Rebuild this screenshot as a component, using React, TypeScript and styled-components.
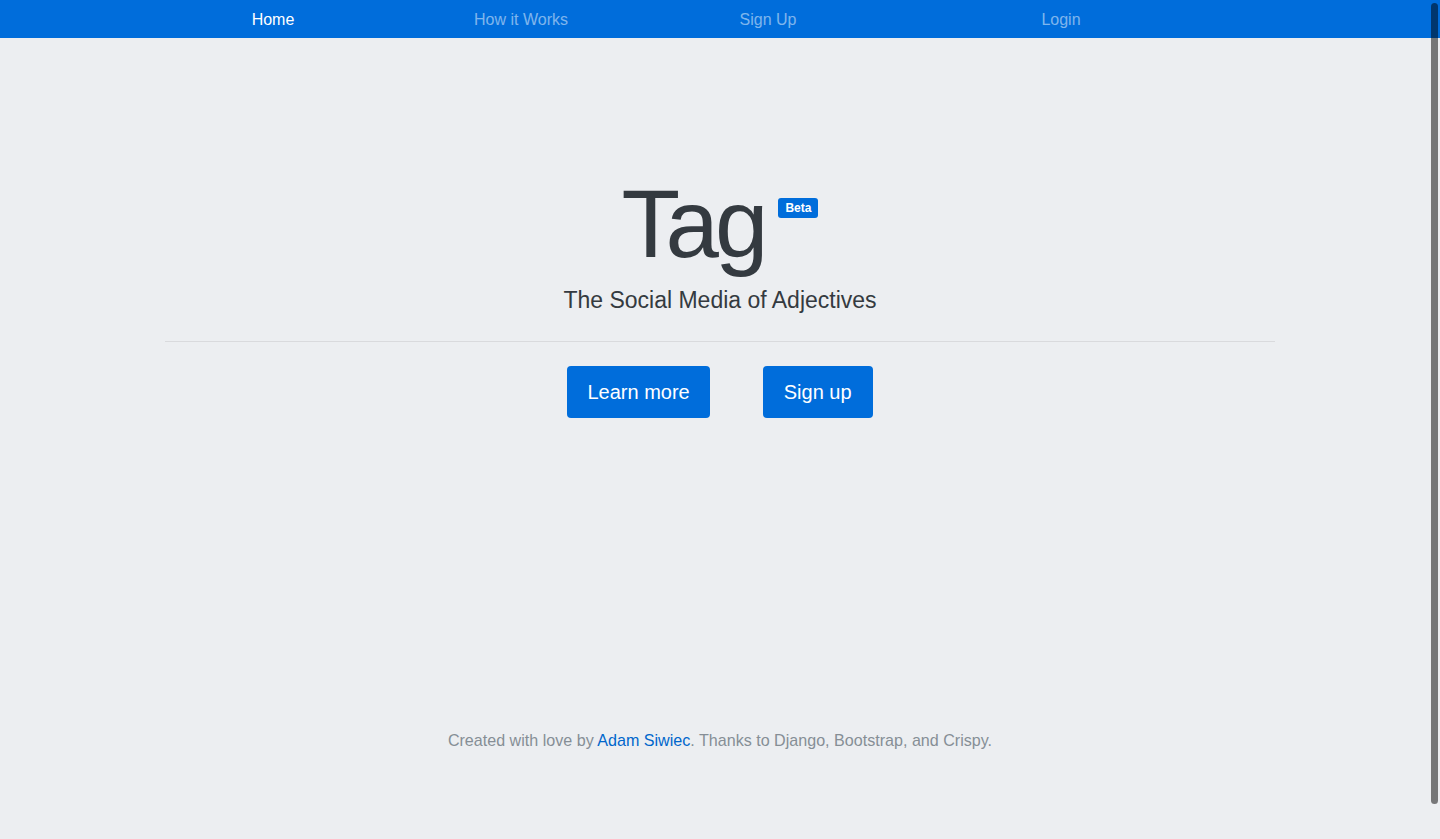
import React from 'react';
import styled, { createGlobalStyle } from 'styled-components';

const GlobalStyle = createGlobalStyle`
    html, body {
        margin: 0;
        padding: 0;
        height: 100%;
        overflow: hidden;
        background: #eceef1;
    }
    body {
        font-family: 'Liberation Sans', Arial, Helvetica, sans-serif;
        color: #343a40;
    }
`;

const Page = styled.div`
    min-height: 839px;
    background: #eceef1;
`;

const NavBar = styled.nav`
    height: 38px;
    background: #006ddb;
`;

const NavInner = styled.ul`
    list-style: none;
    margin: 0 auto;
    padding: 0;
    width: 1140px;
    height: 38px;
    display: grid;
    grid-template-columns: 246px 250px 244px 342px;
    align-items: center;
    justify-items: center;
`;

const NavItem = styled.li<{ $active?: boolean }>`
    font-size: 16px;
    line-height: 24px;
    padding-top: 1px;
    color: ${(p) => (p.$active ? '#ffffff' : 'rgba(255, 255, 255, 0.5)')};
    cursor: pointer;
`;

const Container = styled.main`
    width: 1110px;
    margin: 0 auto;
    padding-top: 128px;
    text-align: center;
`;

const Title = styled.h1`
    margin: 0;
    font-size: 96px;
    font-weight: 300;
    line-height: 1.2;
    letter-spacing: -4px;
    color: #343a40;
`;

const Badge = styled.span`
    display: inline-block;
    vertical-align: top;
    margin-top: 32px;
    margin-left: 14px;
    padding: 3px 7px;
    font-size: 12px;
    font-weight: 700;
    line-height: 14px;
    letter-spacing: 0;
    color: #fff;
    background: #006ddb;
    border-radius: 3px;
`;

const Lead = styled.p`
    margin: 2px 0 0;
    font-size: 23px;
    font-weight: 300;
    line-height: 1.5;
    color: #343a40;
`;

const Divider = styled.hr`
    margin: 23px 0 24px;
    border: 0;
    border-top: 1px solid #d9dadd;
`;

const ButtonRow = styled.div`
    display: flex;
    justify-content: center;
    gap: 53px;
`;

const Button = styled.a<{ $wide?: boolean }>`
    display: inline-block;
    padding: 11px ${(p) => (p.$wide ? '20px' : '21px')};
    font-size: 20px;
    line-height: 30px;
    color: #fff;
    background: #006ddb;
    border-radius: 4px;
    text-decoration: none;
    cursor: pointer;
`;

const Footer = styled.footer`
    margin-top: 310px;
    font-size: 16.1px;
    line-height: 24px;
    color: #868e96;
    text-align: center;
`;

const FooterLink = styled.a`
    color: #0066cc;
    text-decoration: none;
`;

// overlay scrollbar thumb, macOS style
const ScrollThumb = styled.div`
    position: fixed;
    top: 3px;
    right: 2px;
    width: 7px;
    height: 801px;
    border-radius: 4px;
    background: rgba(0, 0, 0, 0.5);
`;

const App = () => {
    return (
        <Page>
            <GlobalStyle />
            <NavBar>
                <NavInner>
                    <NavItem $active>Home</NavItem>
                    <NavItem>How it Works</NavItem>
                    <NavItem>Sign Up</NavItem>
                    <NavItem>Login</NavItem>
                </NavInner>
            </NavBar>
            <Container>
                <Title>
                    Tag<Badge>Beta</Badge>
                </Title>
                <Lead>The Social Media of Adjectives</Lead>
                <Divider />
                <ButtonRow>
                    <Button $wide>Learn more</Button>
                    <Button>Sign up</Button>
                </ButtonRow>
                <Footer>
                    Created with love by <FooterLink>Adam Siwiec</FooterLink>. Thanks to Django,
                    Bootstrap, and Crispy.
                </Footer>
            </Container>
            <ScrollThumb />
        </Page>
    );
};

export default App;
